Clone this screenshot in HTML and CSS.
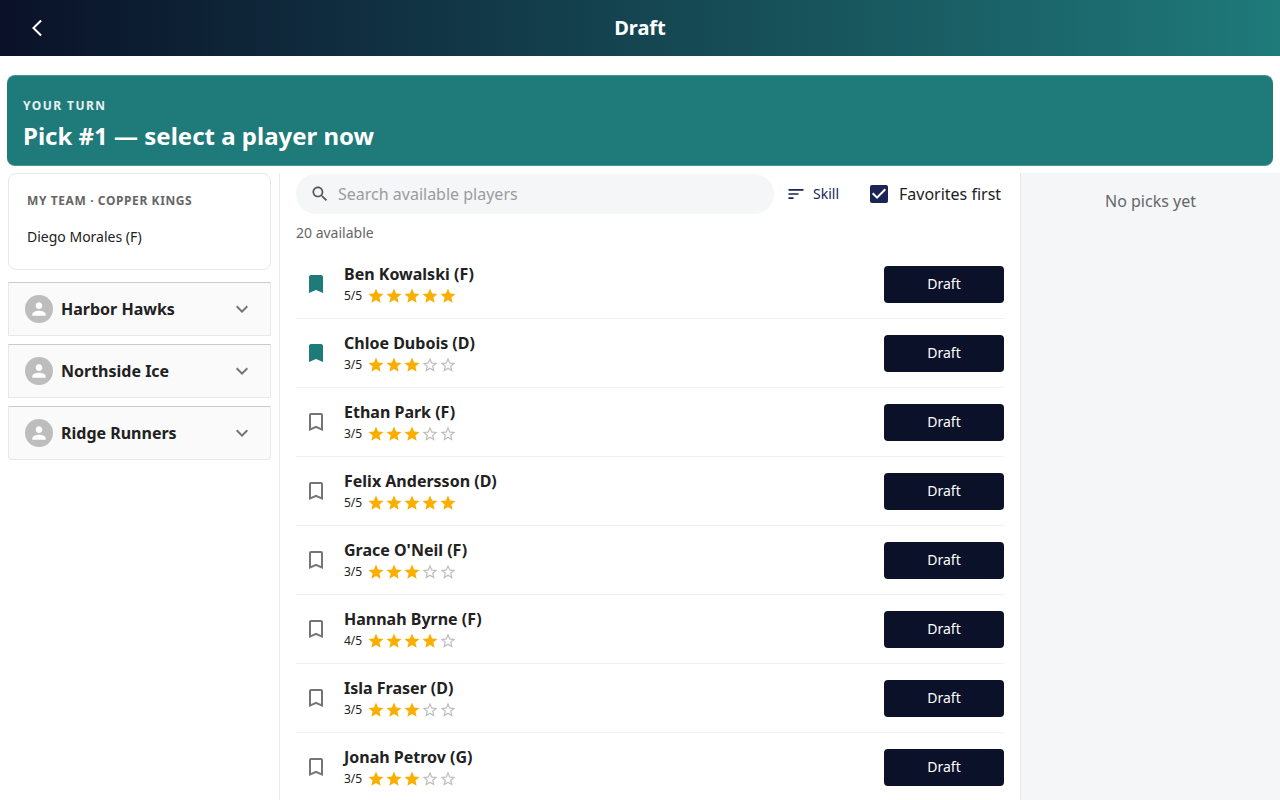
FILE: index.html
```
<!DOCTYPE html>
<html lang="en">
<head>
    <meta charset="UTF-8">
    <meta name="viewport" content="width=device-width, initial-scale=1.0">
    <title>Draft</title>
    <link rel="stylesheet" href="styles.css">
</head>
<body>
    <!-- shared icons -->
    <svg class="sprite" aria-hidden="true">
        <symbol id="back" viewBox="0 0 24 24"><path d="M17.77 3.77 16 2 6 12l10 10 1.77-1.77L9.54 12z"/></symbol>
        <symbol id="person" viewBox="0 0 24 24"><path d="M12 12c2.21 0 4-1.79 4-4s-1.79-4-4-4-4 1.79-4 4 1.79 4 4 4zm0 2c-2.67 0-8 1.34-8 4v2h16v-2c0-2.66-5.33-4-8-4z"/></symbol>
        <symbol id="chevron" viewBox="0 0 24 24"><path d="M16.59 8.59 12 13.17 7.41 8.59 6 10l6 6 6-6z"/></symbol>
        <symbol id="search" viewBox="0 0 24 24"><path d="M15.5 14h-.79l-.28-.27C15.41 12.59 16 11.11 16 9.5 16 5.91 13.09 3 9.5 3S3 5.91 3 9.5 5.91 16 9.5 16c1.61 0 3.09-.59 4.23-1.57l.27.28v.79l5 4.99L20.49 19l-4.99-5zm-6 0C7.01 14 5 11.99 5 9.5S7.01 5 9.5 5 14 7.01 14 9.5 11.99 14 9.5 14z"/></symbol>
        <symbol id="sort" viewBox="0 0 24 24"><path d="M3 18h6v-2H3v2zM3 6v2h18V6H3zm0 7h12v-2H3v2z"/></symbol>
        <symbol id="bookmark" viewBox="0 0 24 24"><path d="M17 3H7c-1.1 0-2 .9-2 2v16l7-3 7 3V5c0-1.1-.9-2-2-2z"/></symbol>
        <symbol id="bookmark-empty" viewBox="0 0 24 24"><path d="M17 3H7c-1.1 0-2 .9-2 2v16l7-3 7 3V5c0-1.1-.9-2-2-2zm0 15-5-2.18L7 18V5h10v13z"/></symbol>
        <symbol id="star" viewBox="0 0 24 24"><path d="M12 17.27 18.18 21l-1.64-7.03L22 9.24l-7.19-.61L12 2 9.19 8.63 2 9.24l5.46 4.73L5.82 21z"/></symbol>
        <symbol id="star-empty" viewBox="0 0 24 24"><path d="m22 9.24-7.19-.62L12 2 9.19 8.63 2 9.24l5.46 4.73L5.82 21 12 17.27 18.18 21l-1.63-7.03L22 9.24zM12 15.4l-3.76 2.27 1-4.28-3.32-2.88 4.38-.38L12 6.1l1.71 4.04 4.38.38-3.32 2.88 1 4.28L12 15.4z"/></symbol>
        <symbol id="rating-3" viewBox="0 0 90 18">
            <g class="on"><use href="#star" width="18" height="18"/><use href="#star" x="18" width="18" height="18"/><use href="#star" x="36" width="18" height="18"/></g>
            <g class="off"><use href="#star-empty" x="54" width="18" height="18"/><use href="#star-empty" x="72" width="18" height="18"/></g>
        </symbol>
        <symbol id="rating-4" viewBox="0 0 90 18">
            <g class="on"><use href="#star" width="18" height="18"/><use href="#star" x="18" width="18" height="18"/><use href="#star" x="36" width="18" height="18"/><use href="#star" x="54" width="18" height="18"/></g>
            <g class="off"><use href="#star-empty" x="72" width="18" height="18"/></g>
        </symbol>
        <symbol id="rating-5" viewBox="0 0 90 18">
            <g class="on"><use href="#star" width="18" height="18"/><use href="#star" x="18" width="18" height="18"/><use href="#star" x="36" width="18" height="18"/><use href="#star" x="54" width="18" height="18"/><use href="#star" x="72" width="18" height="18"/></g>
        </symbol>
    </svg>

    <header class="topbar">
        <button class="back" aria-label="Back"><svg><use href="#back"/></svg></button>
        <h1>Draft</h1>
    </header>

    <section class="turn">
        <p class="turn-label">YOUR TURN</p>
        <h2>Pick #1 — select a player now</h2>
    </section>

    <div class="columns">
        <aside class="teams">
            <div class="my-team">
                <h3>MY TEAM · COPPER KINGS</h3>
                <p>Diego Morales (F)</p>
            </div>
            <button class="team">
                <span class="avatar"><svg><use href="#person"/></svg></span>
                <span class="team-name">Harbor Hawks</span>
                <svg class="chevron"><use href="#chevron"/></svg>
            </button>
            <button class="team">
                <span class="avatar"><svg><use href="#person"/></svg></span>
                <span class="team-name">Northside Ice</span>
                <svg class="chevron"><use href="#chevron"/></svg>
            </button>
            <button class="team">
                <span class="avatar"><svg><use href="#person"/></svg></span>
                <span class="team-name">Ridge Runners</span>
                <svg class="chevron"><use href="#chevron"/></svg>
            </button>
        </aside>

        <main class="players">
            <div class="toolbar">
                <label class="search">
                    <svg><use href="#search"/></svg>
                    <input type="text" placeholder="Search available players" aria-label="Search available players">
                </label>
                <button class="sort"><svg><use href="#sort"/></svg>Skill</button>
                <label class="favorites"><input type="checkbox" checked>Favorites first</label>
            </div>
            <p class="count">20 available</p>

            <ul class="list">
                <li class="player">
                    <button class="mark saved" aria-label="Favorite"><svg><use href="#bookmark"/></svg></button>
                    <div class="info">
                        <h4>Ben Kowalski (F)</h4>
                        <div class="skill">5/5<svg><use href="#rating-5"/></svg></div>
                    </div>
                    <button class="draft">Draft</button>
                </li>
                <li class="player">
                    <button class="mark saved" aria-label="Favorite"><svg><use href="#bookmark"/></svg></button>
                    <div class="info">
                        <h4>Chloe Dubois (D)</h4>
                        <div class="skill">3/5<svg><use href="#rating-3"/></svg></div>
                    </div>
                    <button class="draft">Draft</button>
                </li>
                <li class="player">
                    <button class="mark" aria-label="Favorite"><svg><use href="#bookmark-empty"/></svg></button>
                    <div class="info">
                        <h4>Ethan Park (F)</h4>
                        <div class="skill">3/5<svg><use href="#rating-3"/></svg></div>
                    </div>
                    <button class="draft">Draft</button>
                </li>
                <li class="player">
                    <button class="mark" aria-label="Favorite"><svg><use href="#bookmark-empty"/></svg></button>
                    <div class="info">
                        <h4>Felix Andersson (D)</h4>
                        <div class="skill">5/5<svg><use href="#rating-5"/></svg></div>
                    </div>
                    <button class="draft">Draft</button>
                </li>
                <li class="player">
                    <button class="mark" aria-label="Favorite"><svg><use href="#bookmark-empty"/></svg></button>
                    <div class="info">
                        <h4>Grace O'Neil (F)</h4>
                        <div class="skill">3/5<svg><use href="#rating-3"/></svg></div>
                    </div>
                    <button class="draft">Draft</button>
                </li>
                <li class="player">
                    <button class="mark" aria-label="Favorite"><svg><use href="#bookmark-empty"/></svg></button>
                    <div class="info">
                        <h4>Hannah Byrne (F)</h4>
                        <div class="skill">4/5<svg><use href="#rating-4"/></svg></div>
                    </div>
                    <button class="draft">Draft</button>
                </li>
                <li class="player">
                    <button class="mark" aria-label="Favorite"><svg><use href="#bookmark-empty"/></svg></button>
                    <div class="info">
                        <h4>Isla Fraser (D)</h4>
                        <div class="skill">3/5<svg><use href="#rating-3"/></svg></div>
                    </div>
                    <button class="draft">Draft</button>
                </li>
                <li class="player">
                    <button class="mark" aria-label="Favorite"><svg><use href="#bookmark-empty"/></svg></button>
                    <div class="info">
                        <h4>Jonah Petrov (G)</h4>
                        <div class="skill">3/5<svg><use href="#rating-3"/></svg></div>
                    </div>
                    <button class="draft">Draft</button>
                </li>
            </ul>
        </main>

        <aside class="picks">
            <p>No picks yet</p>
        </aside>
    </div>
</body>
</html>
```

FILE: styles.css
```
* {
    box-sizing: border-box;
}
body {
    display: flex;
    flex-direction: column;
    height: 100vh;
    margin: 0;
    overflow: hidden;
    font-family: "Noto Sans", "Open Sans", sans-serif;
    font-size: 16px;
    line-height: 24px;
    color: #212121;
    background: #fff;
}
h1, h2, h3, h4, p, ul {
    margin: 0;
    padding: 0;
}
button, input {
    font: inherit;
    color: inherit;
}
button {
    padding: 0;
    border: none;
    background: none;
    cursor: pointer;
}
svg {
    display: block;
    flex-shrink: 0;
    width: 20px;
    height: 20px;
    fill: currentColor;
}
.sprite {
    position: absolute;
    width: 0;
    height: 0;
}

/* header */
.topbar {
    display: grid;
    grid-template-columns: 40px 1fr 40px;
    align-items: center;
    flex-shrink: 0;
    height: 56px;
    padding: 0 17px;
    color: #fff;
    background: linear-gradient(90deg, #0a1128, #1f7a7a);
}
.back {
    display: grid;
    place-items: center;
    height: 40px;
}
.topbar h1 {
    font-size: 20px;
    font-weight: 700;
    text-align: center;
}
.turn {
    flex-shrink: 0;
    margin: 19px 7px 7px;
    padding: 20px 16px 11px;
    border: 1px solid #4b9494;
    border-width: 1px 0;
    border-radius: 8px;
    color: #fff;
    background: #1f7a7a;
}
.turn-label {
    margin-bottom: 2px;
    font-size: 12px;
    font-weight: 700;
    line-height: 20px;
    letter-spacing: 0.12em;
    opacity: 0.9;
}
.turn h2 {
    font-size: 24px;
    font-weight: 700;
    line-height: 36px;
}

.columns {
    display: grid;
    grid-template-columns: 280px 1fr 260px;
    flex: 1;
    min-height: 0;
}

/* teams */
.teams {
    display: flex;
    flex-direction: column;
    gap: 8px;
    padding: 0 8px;
    border-right: 1px solid #e9ebed;
}
.my-team {
    margin-bottom: 4px;
    padding: 17px 18px 22px;
    border: 1px solid #e6e8ea;
    border-radius: 8px;
}
.my-team h3 {
    margin-bottom: 16px;
    font-size: 12px;
    font-weight: 700;
    line-height: 20px;
    letter-spacing: 0.05em;
    color: #666;
}
.my-team p {
    font-size: 14px;
    line-height: 20px;
}
.team {
    display: flex;
    align-items: center;
    gap: 8px;
    height: 54px;
    padding: 0 16px;
    border: 1px solid #e6e8ea;
    border-top-color: #c8cacc;
    text-align: left;
    background: #fafafa;
}
.team:last-child {
    border-radius: 0 0 4px 4px;
}
.avatar {
    display: grid;
    place-items: center;
    width: 28px;
    height: 28px;
    border-radius: 50%;
    color: #fff;
    background: #bdbdbd;
}
.team-name {
    flex: 1;
    font-weight: 700;
}
.chevron {
    width: 24px;
    height: 24px;
    color: #757575;
}

/* player list */
.players {
    padding: 0 16px;
    overflow: hidden;
}
.toolbar {
    display: flex;
    align-items: center;
    height: 42px;
}
.search {
    display: flex;
    align-items: center;
    flex: 1;
    gap: 8px;
    height: 40px;
    padding: 0 14px;
    border-radius: 20px;
    color: #555;
    background: #f4f6f8;
}
.search input {
    flex: 1;
    min-width: 0;
    padding: 0;
    border: none;
    outline: none;
    color: #212121;
    background: none;
}
.search input::placeholder {
    color: #9a9c9d;
}
.sort {
    display: flex;
    align-items: center;
    gap: 7px;
    width: 55px;
    margin: 0 29px 0 12px;
    font-size: 14px;
    color: #1a2456;
}
.favorites {
    display: flex;
    align-items: center;
    gap: 11px;
    width: 134px;
}
.favorites input {
    appearance: none;
    width: 18px;
    height: 18px;
    margin: 0;
    border-radius: 2px;
    background: #1a2456;
}
.favorites input:checked::before {
    content: "";
    display: block;
    height: 100%;
    background: #fff;
    clip-path: polygon(39% 78%, 11% 50%, 19% 42%, 39% 62%, 81% 20%, 89% 28%);
}
.count {
    margin: 8px 0 7px;
    font-size: 14px;
    line-height: 20px;
    color: #666;
}
.list {
    list-style: none;
}
.player {
    display: flex;
    align-items: center;
    gap: 8px;
    padding: 12px 0;
    border-bottom: 1px solid #eef0f1;
}
.mark {
    display: grid;
    place-items: center;
    width: 40px;
    height: 40px;
    color: #757575;
}
.mark.saved {
    color: #1f7a7a;
}
.mark svg {
    width: 24px;
    height: 24px;
}
.info {
    flex: 1;
}
.info h4 {
    font-size: 16px;
    font-weight: 700;
}
.skill {
    display: flex;
    align-items: center;
    gap: 5px;
    font-size: 12px;
    line-height: 20px;
}
.skill svg {
    width: 90px;
    height: 18px;
}
.on {
    fill: #faaf00;
}
.off {
    fill: #bdbdbd;
}
.draft {
    width: 120px;
    height: 37px;
    border-radius: 4px;
    font-size: 14px;
    color: #fff;
    background: #0a1128;
}

/* picks */
.picks {
    padding-top: 16px;
    border-left: 1px solid #e6e8ea;
    text-align: center;
    color: #666;
    background: #f4f6f8;
}
```
